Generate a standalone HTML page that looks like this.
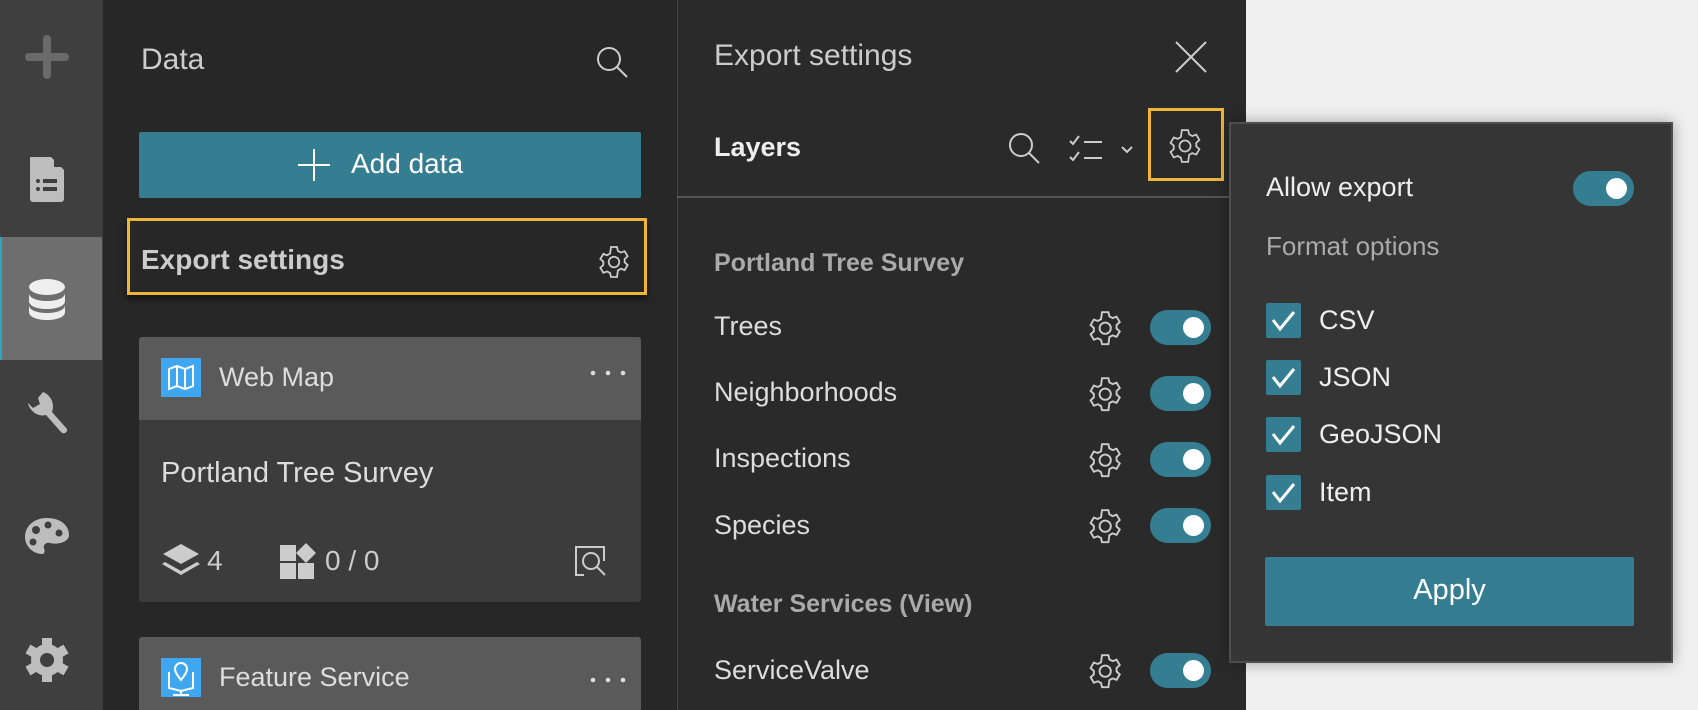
<!DOCTYPE html>
<html><head><meta charset="utf-8"><style>
*{margin:0;padding:0;box-sizing:border-box}
body{width:1698px;height:710px;overflow:hidden;background:#f0f0f0;font-family:"Liberation Sans",sans-serif;position:relative}
.a{position:absolute}
.t{position:absolute;white-space:nowrap;line-height:1}
.tog{position:absolute;width:61px;height:35px;border-radius:18px;background:#357e92}
.tog:after{content:"";position:absolute;right:7px;top:7px;width:21px;height:21px;border-radius:50%;background:#fff}
.cb{position:absolute;left:1266px;width:35px;height:35px;background:#357e92;border-radius:2px}
</style></head><body>
<!-- rail -->
<div class="a" style="left:0;top:0;width:103px;height:710px;background:#3f3f3f"></div>
<div class="a" style="left:0;top:237px;width:102px;height:123px;background:#6e6e6e;border-left:2px solid #2fa6c0"></div>
<svg class="a" style="left:0;top:0" width="103" height="710">
<g fill="#9a9a9a" stroke="none">
<rect x="25" y="53" width="44" height="8" rx="4" fill="#6a6a6a"/><rect x="43" y="35" width="8" height="44" rx="4" fill="#6a6a6a"/>
<path d="M30 157h21l13 13v29a3 3 0 0 1-3 3H33a3 3 0 0 1-3-3z" fill="#bdbdbd"/>
<path d="M54 157l10 10H54z" fill="#3f3f3f"/>
<g fill="#3f3f3f"><circle cx="38" cy="181" r="2"/><circle cx="38" cy="189" r="2"/><rect x="43" y="179" width="14" height="4"/><rect x="43" y="187" width="14" height="4"/></g>
<ellipse cx="47" cy="287" rx="18" ry="8" fill="#eee"/>
<path d="M29 293c0 5 8 8 18 8s18-3 18-8v8c0 5-8 8-18 8s-18-3-18-8z" fill="#eee"/>
<path d="M29 305c0 5 8 8 18 8s18-3 18-8v7c0 5-8 8-18 8s-18-3-18-8z" fill="#eee"/>
<path d="M28 404c3 8 10 13 18 11l15 17c3 3 7 0 6-3L52 412c3-8-1-17-9-20l-5 6 2 6-7 4-5-5z" fill="#bdbdbd"/>
<path d="M47 518c-14 0-22 9-22 19 0 10 9 17 17 17 3 0 3-3 2-6s2-6 6-5c8 2 19-1 19-8 0-10-9-17-22-17z" fill="#bdbdbd"/>
<g fill="#3f3f3f"><circle cx="36" cy="530" r="4"/><circle cx="48" cy="525" r="3.5"/><circle cx="59" cy="533" r="3.5"/><circle cx="33" cy="542" r="3.5"/></g>
<g transform="translate(47 660)" fill="#bdbdbd"><circle r="16"/><g><rect x="-5" y="-22" width="10" height="44"/><rect x="-5" y="-22" width="10" height="44" transform="rotate(60)"/><rect x="-5" y="-22" width="10" height="44" transform="rotate(120)"/></g><circle r="7" fill="#3f3f3f"/></g>
</g></svg>
<!-- data panel -->
<div class="a" style="left:103px;top:0;width:574px;height:710px;background:#272727"></div>
<div class="t" style="left:141px;top:45px;font-size:30px;color:#ccc">Data</div>
<svg class="a" style="left:594px;top:44px" width="36" height="36" fill="none" stroke="#ccc" stroke-width="2"><circle cx="15" cy="15" r="11"/><path d="M23 23l10 10"/></svg>
<div class="a" style="left:139px;top:132px;width:502px;height:66px;background:#357e92;border-radius:2px"></div>
<svg class="a" style="left:297px;top:148px" width="34" height="34" stroke="#fff" stroke-width="2"><path d="M17 1v32M1 17h32"/></svg>
<div class="t" style="left:351px;top:150px;font-size:28px;color:#fff">Add data</div>
<div class="a" style="left:127px;top:218px;width:520px;height:77px;border:3px solid #efb538;box-shadow:0 4px 6px rgba(0,0,0,.5)"></div>
<div class="t" style="left:141px;top:246px;font-size:28px;font-weight:bold;color:#ccc">Export settings</div>
<svg class="a" style="left:596px;top:244px" width="36" height="36" viewBox="0 0 24 24" fill="none" stroke="#ccc" stroke-width="1.2"><path d="M10 2h4l.6 2.6 2 1.1 2.5-.9 2 3.4-2 1.8v2.2l2 1.8-2 3.4-2.5-.9-2 1.1L14 22h-4l-.6-2.6-2-1.1-2.5.9-2-3.4 2-1.8V11.8l-2-1.8 2-3.4 2.5.9 2-1.1z"/><circle cx="12" cy="12" r="3.5"/></svg>
<div class="a" style="left:139px;top:337px;width:502px;height:265px;background:#3c3c3c;border-radius:3px"></div>
<div class="a" style="left:139px;top:337px;width:502px;height:83px;background:#5a5a5a;border-radius:3px 3px 0 0"></div>
<div class="a" style="left:161px;top:358px;width:40px;height:39px;background:#3ea7f0"></div>
<svg class="a" style="left:161px;top:358px" width="40" height="39" fill="none" stroke="#fff" stroke-width="2"><path d="M8 11l8-3 8 3 8-3v20l-8 3-8-3-8 3zM16 8v20M24 11v20"/></svg>
<div class="t" style="left:219px;top:364px;font-size:27px;color:#ddd">Web Map</div>
<svg class="a" style="left:588px;top:368px" width="40" height="10" fill="#ddd"><circle cx="5" cy="5" r="2.3"/><circle cx="20" cy="5" r="2.3"/><circle cx="35" cy="5" r="2.3"/></svg>
<div class="t" style="left:161px;top:459px;font-size:29px;color:#ddd">Portland Tree Survey</div>
<svg class="a" style="left:161px;top:540px" width="40" height="40" fill="#ccc"><path d="M20 4L38 14 20 24 2 14z"/><path d="M4 22l16 9 16-9 3 2-19 11L1 24z"/></svg>
<div class="t" style="left:207px;top:547px;font-size:28px;color:#ccc">4</div>
<svg class="a" style="left:280px;top:543px" width="38" height="38" fill="#ccc"><rect x="0" y="2" width="16" height="16"/><rect x="0" y="20" width="16" height="16"/><rect x="18" y="20" width="16" height="16"/><path d="M26 0l10 10-10 10-10-10z"/></svg>
<div class="t" style="left:325px;top:547px;font-size:28px;color:#ccc">0 / 0</div>
<svg class="a" style="left:574px;top:545px" width="36" height="34" fill="none" stroke="#ccc" stroke-width="2"><path d="M10 30H2V2h28v14"/><circle cx="17" cy="16" r="8"/><path d="M23 22l8 8"/></svg>
<div class="a" style="left:139px;top:637px;width:502px;height:73px;background:#5a5a5a;border-radius:3px 3px 0 0"></div>
<div class="a" style="left:161px;top:658px;width:40px;height:39px;background:#3ea7f0"></div>
<svg class="a" style="left:161px;top:658px" width="40" height="39" fill="none" stroke="#fff" stroke-width="2"><path d="M20 22c-4-5-6-8-6-11a6 6 0 0 1 12 0c0 3-2 6-6 11zM8 14v16l12 3 12-3V14M20 33v4M12 37h16"/></svg>
<div class="t" style="left:219px;top:664px;font-size:27px;color:#ddd">Feature Service</div>
<svg class="a" style="left:588px;top:675px" width="40" height="10" fill="#ddd"><circle cx="5" cy="5" r="2.3"/><circle cx="20" cy="5" r="2.3"/><circle cx="35" cy="5" r="2.3"/></svg>
<!-- export panel -->
<div class="a" style="left:677px;top:0;width:569px;height:710px;background:#2a2a2a;border-left:1px solid #444"></div>
<div class="t" style="left:714px;top:41px;font-size:30px;color:#ccc">Export settings</div>
<svg class="a" style="left:1174px;top:40px" width="34" height="34" stroke="#ccc" stroke-width="2"><path d="M2 2l30 30M32 2L2 32"/></svg>
<div class="t" style="left:714px;top:134px;font-size:27px;font-weight:bold;color:#eee">Layers</div>
<svg class="a" style="left:1006px;top:130px" width="36" height="36" fill="none" stroke="#ccc" stroke-width="2"><circle cx="15" cy="15" r="11"/><path d="M23 23l10 10"/></svg>
<svg class="a" style="left:1068px;top:133px" width="74" height="32" fill="none" stroke="#ccc" stroke-width="2"><path d="M2 8l3 3 6-8M2 24l3 3 6-8M16 9h18M16 25h18M54 14l5 5 5-5"/></svg>
<div class="a" style="left:1148px;top:108px;width:76px;height:73px;border:3px solid #efb538"></div>
<svg class="a" style="left:1166px;top:127px" width="38" height="38" viewBox="0 0 24 24" fill="none" stroke="#ccc" stroke-width="1.1"><path d="M10 2h4l.6 2.6 2 1.1 2.5-.9 2 3.4-2 1.8v2.2l2 1.8-2 3.4-2.5-.9-2 1.1L14 22h-4l-.6-2.6-2-1.1-2.5.9-2-3.4 2-1.8V11.8l-2-1.8 2-3.4 2.5.9 2-1.1z"/><circle cx="12" cy="12" r="3.5"/></svg>
<div class="a" style="left:677px;top:196px;width:552px;height:2px;background:#555"></div>
<div class="t" style="left:714px;top:251px;font-size:25px;font-weight:bold;color:#aaa">Portland Tree Survey</div>
<div class="t" style="left:714px;top:313px;font-size:27px;color:#ddd">Trees</div>
<div class="t" style="left:714px;top:379px;font-size:27px;color:#ddd">Neighborhoods</div>
<div class="t" style="left:714px;top:445px;font-size:27px;color:#ddd">Inspections</div>
<div class="t" style="left:714px;top:512px;font-size:27px;color:#ddd">Species</div>
<div class="t" style="left:714px;top:592px;font-size:25px;font-weight:bold;color:#aaa">Water Services (View)</div>
<div class="t" style="left:714px;top:657px;font-size:27px;color:#ddd">ServiceValve</div>
<svg class="a" style="left:1084px;top:0" width="44" height="710" fill="none" stroke="#ccc" stroke-width="1.2">
<defs><g id="g"><path d="M10 2h4l.6 2.6 2 1.1 2.5-.9 2 3.4-2 1.8v2.2l2 1.8-2 3.4-2.5-.9-2 1.1L14 22h-4l-.6-2.6-2-1.1-2.5.9-2-3.4 2-1.8V11.8l-2-1.8 2-3.4 2.5.9 2-1.1z"/><circle cx="12" cy="12" r="3.5"/></g></defs>
<use href="#g" transform="translate(2 309) scale(1.6)"/><use href="#g" transform="translate(2 375) scale(1.6)"/><use href="#g" transform="translate(2 441) scale(1.6)"/><use href="#g" transform="translate(2 507) scale(1.6)"/><use href="#g" transform="translate(2 652) scale(1.6)"/>
</svg>
<div class="tog" style="left:1150px;top:310px"></div>
<div class="tog" style="left:1150px;top:376px"></div>
<div class="tog" style="left:1150px;top:442px"></div>
<div class="tog" style="left:1150px;top:508px"></div>
<div class="tog" style="left:1150px;top:653px"></div>
<!-- popover -->
<div class="a" style="left:1229px;top:122px;width:444px;height:541px;background:#353535;border:2px solid #4e4e4e;box-shadow:0 0 14px rgba(0,0,0,.35)"></div>
<div class="t" style="left:1266px;top:174px;font-size:27px;color:#eee">Allow export</div>
<div class="tog" style="left:1573px;top:171px"></div>
<div class="t" style="left:1266px;top:233px;font-size:26px;color:#aaa">Format options</div>
<div class="cb" style="top:303px"></div><div class="cb" style="top:360px"></div><div class="cb" style="top:417px"></div><div class="cb" style="top:475px"></div>
<svg class="a" style="left:1266px;top:0" width="36" height="520" fill="none" stroke="#fff" stroke-width="3"><path d="M7 320l7 9 14-17M7 377l7 9 14-17M7 434l7 9 14-17M7 492l7 9 14-17"/></svg>
<div class="t" style="left:1319px;top:307px;font-size:27px;color:#eee">CSV</div>
<div class="t" style="left:1319px;top:364px;font-size:27px;color:#eee">JSON</div>
<div class="t" style="left:1319px;top:421px;font-size:27px;color:#eee">GeoJSON</div>
<div class="t" style="left:1319px;top:479px;font-size:27px;color:#eee">Item</div>
<div class="a" style="left:1265px;top:557px;width:369px;height:69px;background:#357e92;border-radius:2px"></div>
<div class="t" style="left:1265px;top:576px;width:369px;text-align:center;font-size:29px;color:#fff">Apply</div>
</body></html>
